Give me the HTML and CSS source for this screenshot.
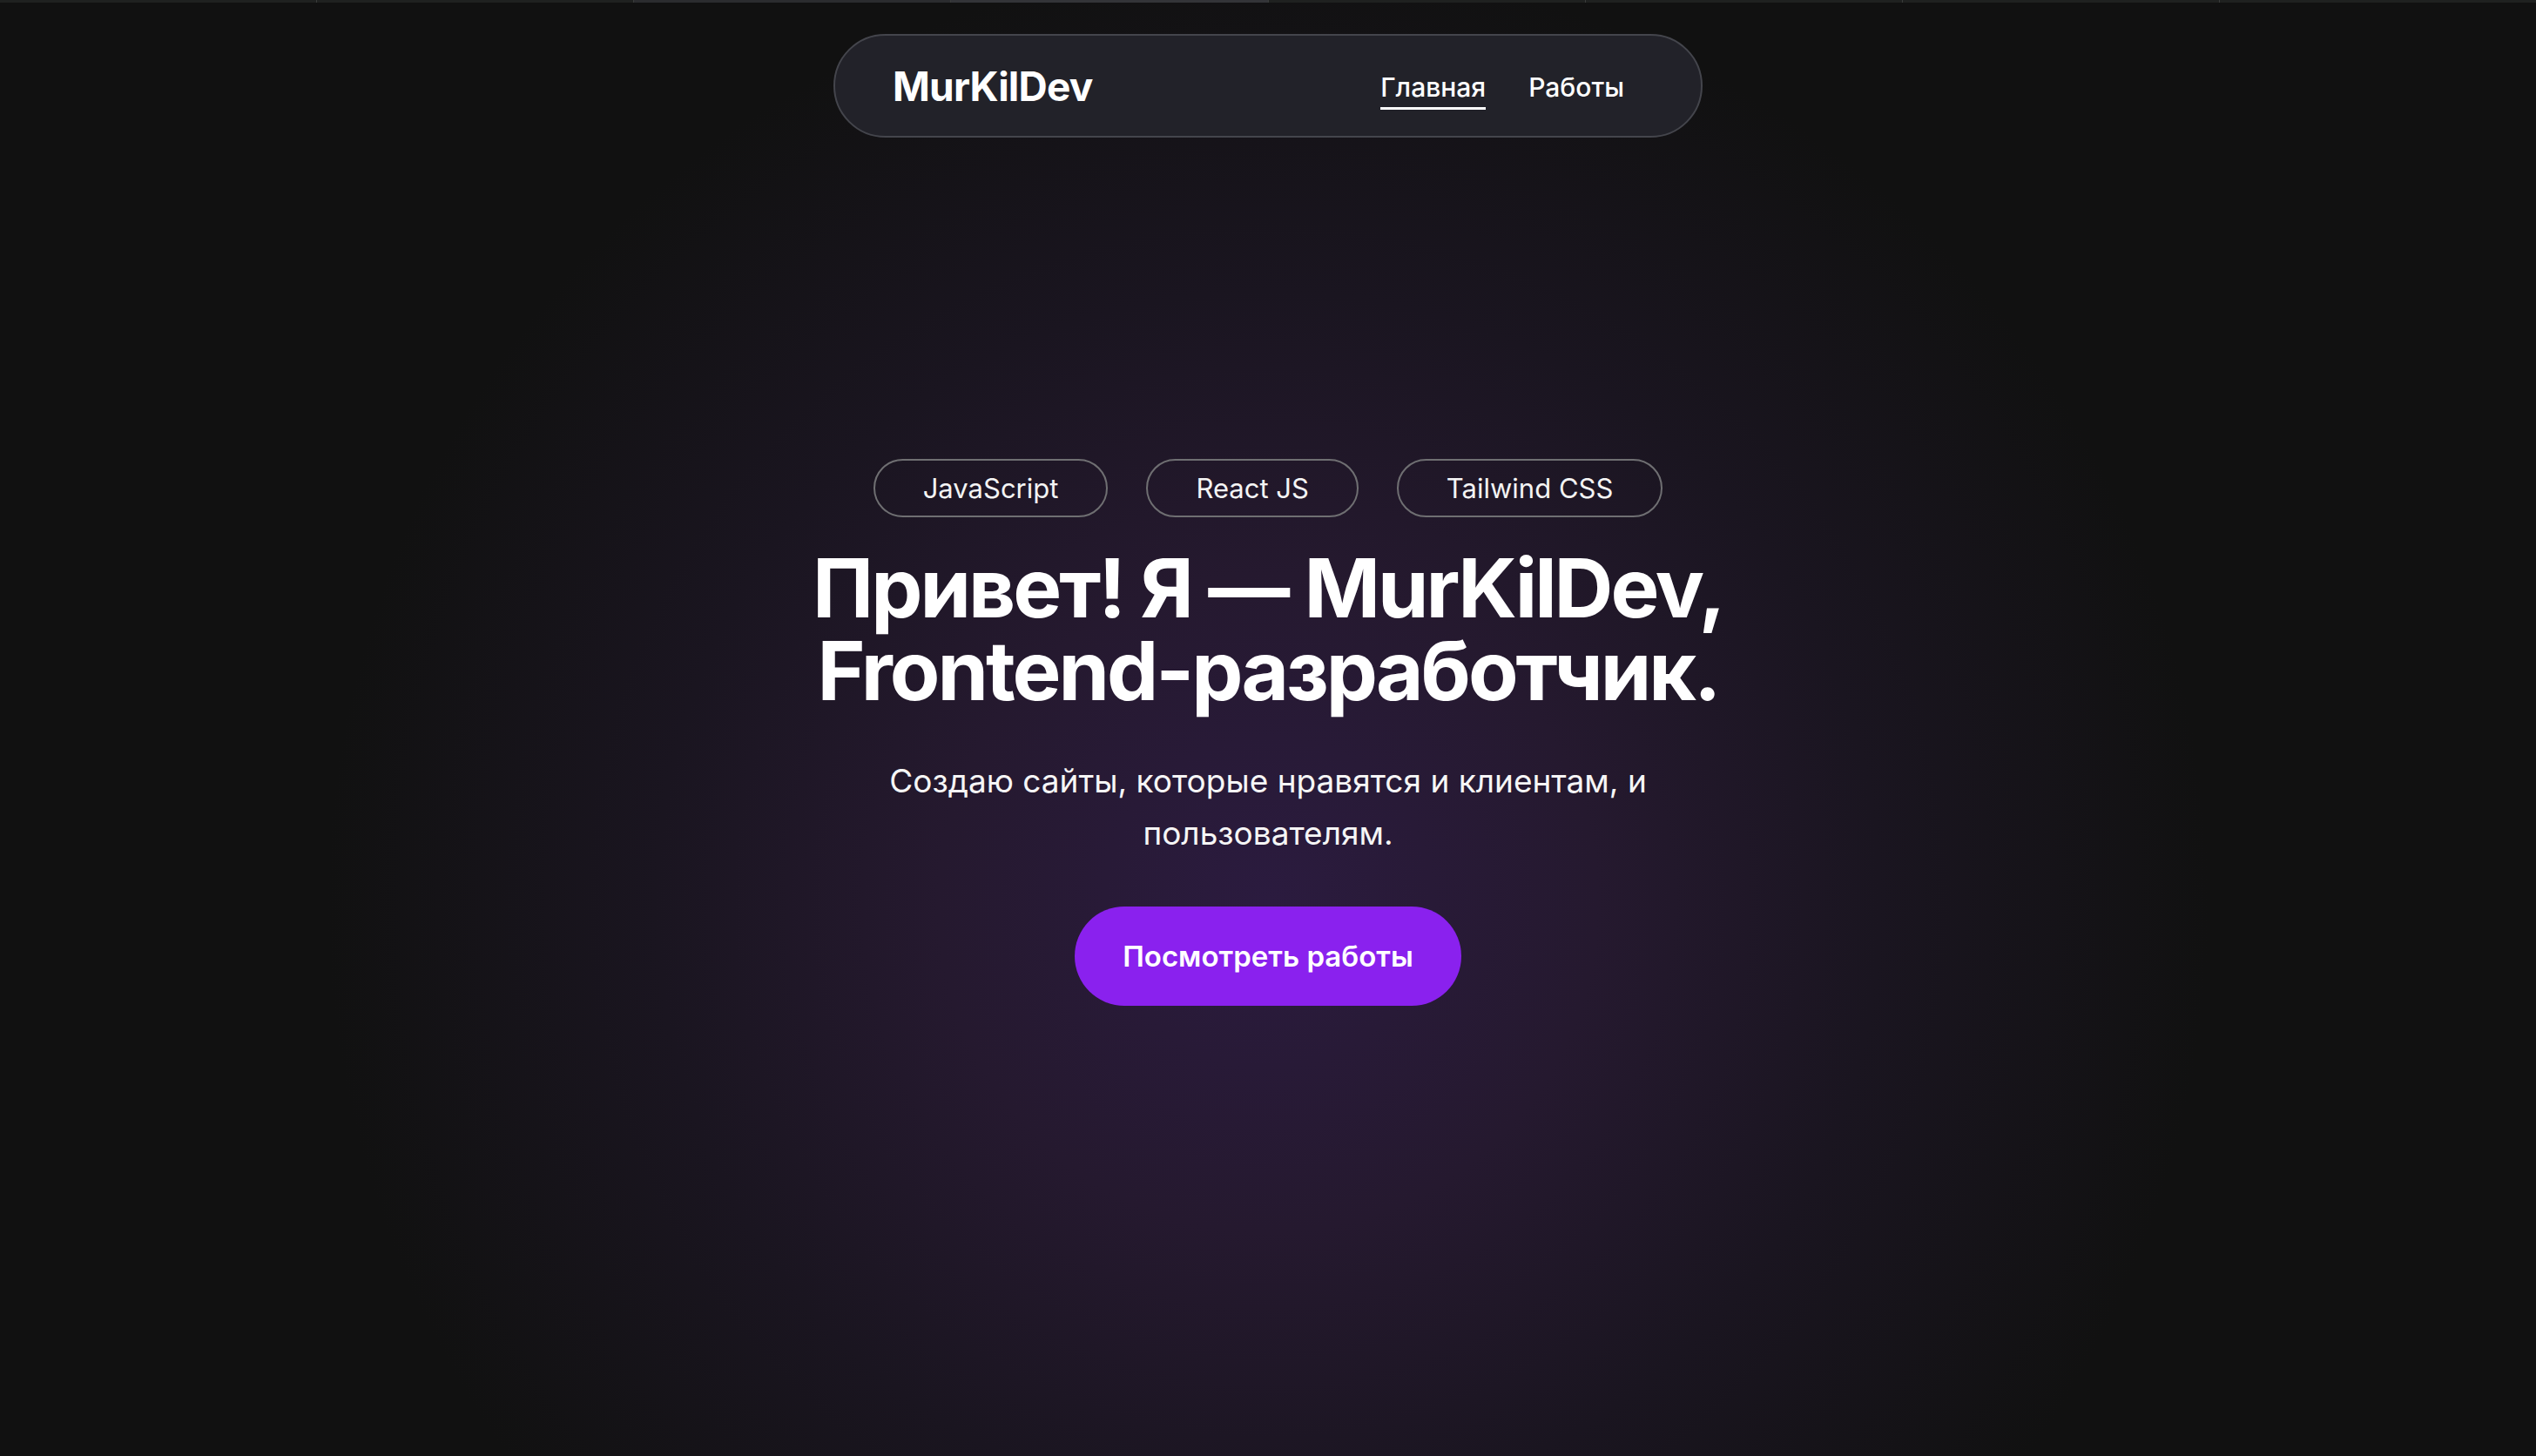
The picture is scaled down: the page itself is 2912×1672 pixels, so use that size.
FILE: index.html
```html
<!DOCTYPE html>
<html lang="ru">
<head>
<meta charset="utf-8">
<title>MurKilDev</title>
<link rel="stylesheet" href="styles.css">
</head>
<body>
<div class="page">
  <div class="topstrip">
    <span class="seg"></span><span class="seg"></span><span class="seg seg-mid"></span><span class="seg seg-light"></span>
    <span class="seg"></span><span class="seg"></span><span class="seg"></span><span class="seg"></span>
  </div>
  <header class="header">
    <nav class="nav">
      <a class="logo" href="#">MurKilDev</a>
      <ul class="nav-links">
        <li><a class="nav-link active" href="#">Главная</a></li>
        <li><a class="nav-link" href="#">Работы</a></li>
      </ul>
    </nav>
  </header>
  <main class="hero">
    <ul class="tags">
      <li class="tag">JavaScript</li>
      <li class="tag">React JS</li>
      <li class="tag">Tailwind CSS</li>
    </ul>
    <h1 class="title">Привет! Я — MurKilDev,<br>Frontend-разработчик.</h1>
    <p class="subtitle">Создаю сайты, которые нравятся и клиентам, и пользователям.</p>
    <a class="cta" href="#">Посмотреть работы</a>
  </main>
</div>
</body>
</html>
```

FILE: styles.css
```css
* { box-sizing: border-box; }
html, body { margin: 0; padding: 0; }
body {
  background: #111111;
  color: #ffffff;
  font-family: "Inter", "Noto Sans", "Liberation Sans", sans-serif;
  min-height: 100vh;
}
.page {
  min-height: 100vh;
  background: radial-gradient(circle 1080px at 50% 62%, #2b1b3f 0%, #25192f 35%, #1a1520 65%, #111111 100%);
}
.topstrip {
  display: flex;
  height: 3px;
}
.seg {
  flex: 1;
  background: #1f2120;
  border-left: 1px solid #3a3c3b;
}
.seg:first-child { border-left: none; }
.seg-mid { background: #2b2c2f; }
.seg-light { background: #333438; }

.header {
  display: flex;
  justify-content: center;
  padding-top: 36px;
}
.nav {
  width: 998px;
  height: 119px;
  display: flex;
  align-items: center;
  justify-content: space-between;
  padding: 0 88px 0 66px;
  background: #222229;
  border: 2px solid #44454c;
  border-radius: 60px;
}
.logo {
  color: #ffffff;
  text-decoration: none;
  font-weight: 700;
  font-size: 46px;
  letter-spacing: -0.8px;
}
.nav-links {
  list-style: none;
  margin: 0;
  padding: 0;
  display: flex;
  gap: 49px;
}
.nav-link {
  display: block;
  color: #ffffff;
  text-decoration: none;
  font-size: 30px;
  font-weight: 500;
  line-height: 36px;
  padding-top: 10px;
  padding-bottom: 5px;
  border-bottom: 3px solid transparent;
}
.nav-link.active { border-bottom-color: #ffffff; }

.hero {
  display: flex;
  flex-direction: column;
  align-items: center;
  text-align: center;
  padding-top: 369px;
}
.tags {
  list-style: none;
  margin: 0;
  padding: 0;
  display: flex;
  gap: 44px;
}
.tag {
  height: 67px;
  display: flex;
  align-items: center;
  padding: 0 55px;
  border: 2px solid #6f6f72;
  border-radius: 40px;
  font-size: 31px;
  color: #f4f4f4;
}
.title {
  margin: 34px 0 0;
  font-size: 94px;
  line-height: 95px;
  font-weight: 700;
  letter-spacing: -3px;
}
.subtitle {
  margin: 49px 0 0;
  max-width: 920px;
  font-size: 37px;
  line-height: 60px;
  color: #f6f6f6;
}
.cta {
  margin-top: 54px;
  width: 444px;
  height: 114px;
  display: flex;
  align-items: center;
  justify-content: center;
  background: #8a21ee;
  color: #ffffff;
  text-decoration: none;
  font-size: 33px;
  font-weight: 600;
  border-radius: 57px;
}
```
